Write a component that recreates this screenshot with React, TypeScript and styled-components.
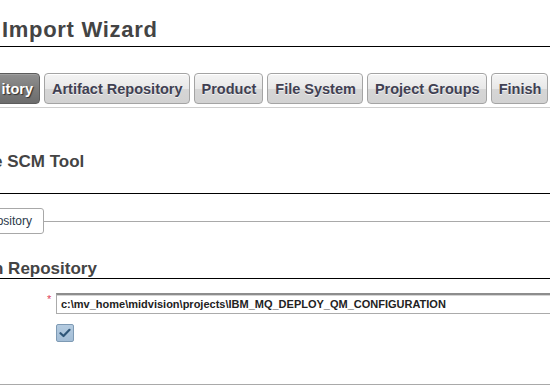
import React from "react";
import styled, { createGlobalStyle } from "styled-components";

const GlobalStyle = createGlobalStyle`
  html, body {
    margin: 0;
    padding: 0;
    background: #ffffff;
    overflow: hidden;
  }
  body {
    font-family: "Liberation Sans", Arial, sans-serif;
  }
`;

const Page = styled.div`
  width: 550px;
  height: 385px;
  overflow: hidden;
  background: #fff;
`;

const Title = styled.h1`
  margin: 0;
  padding: 17px 0 4px 2px;
  font-size: 22px;
  line-height: 25px;
  font-weight: bold;
  letter-spacing: 0.7px;
  color: #444444;
  border-bottom: 1px solid #000;
`;

const TabBar = styled.div`
  display: flex;
  gap: 4px;
  margin-top: 26px;
  padding-bottom: 3px;
  border-bottom: 1px solid #cfcfcf;
`;

const Clip = styled.div<{ $width: number }>`
  width: ${(p) => p.$width}px;
  flex-shrink: 0;
  display: flex;
  justify-content: flex-end;
  overflow: hidden;
`;

const Tab = styled.div<{ $active?: boolean; $lead?: boolean }>`
  flex-shrink: 0;
  box-sizing: border-box;
  height: 31px;
  display: flex;
  align-items: center;
  padding: 0 6px 0 ${(p) => (p.$lead ? 20 : 7)}px;
  border-radius: 4px;
  font-size: 14.5px;
  font-weight: bold;
  white-space: nowrap;
  border: 1px solid ${(p) => (p.$active ? "#5c5c5c" : "#a4a4a4")};
  background: ${(p) =>
    p.$active
      ? "linear-gradient(#909090 0%, #7c7c7c 50%, #6c6c6c 100%)"
      : "linear-gradient(#f4f4f4 0%, #e8e8e8 50%, #d6d6d6 52%, #d2d2d2 100%)"};
  color: ${(p) => (p.$active ? "#ffffff" : "#404052")};
  text-shadow: ${(p) =>
    p.$active ? "1px 1px 1px #2e2e2e" : "0 1px 0 rgba(255,255,255,0.7)"};
  box-shadow: inset 0 1px 0 ${(p) => (p.$active ? "#a0a0a0" : "#ffffff")};
`;

const SectionHeading = styled.h2<{ $gap: number; $pad: number; $lh: number }>`
  margin: ${(p) => p.$gap}px 0 0 0;
  padding: 0 0 ${(p) => p.$pad}px 0;
  text-indent: -7px;
  font-size: 17px;
  line-height: ${(p) => p.$lh}px;
  font-weight: bold;
  color: #444444;
  border-bottom: 1px solid #000;
  white-space: nowrap;
`;

const ButtonRow = styled.div`
  display: flex;
  align-items: center;
  margin-top: 14px;
`;

const OutlineButton = styled.div`
  flex-shrink: 0;
  box-sizing: border-box;
  height: 26px;
  display: flex;
  align-items: center;
  padding: 0 11px 0 20px;
  border: 1px solid #a8a8a8;
  border-radius: 3px;
  background: #ffffff;
  color: #2c3a4a;
  font-size: 12px;
  white-space: nowrap;
`;

const Rule = styled.div`
  flex: 1;
  height: 1px;
  background: #a9a9a9;
`;

const Form = styled.div`
  padding: 14px 0 42px 47px;
  border-bottom: 1px solid #a9a9a9;
`;

const FieldRow = styled.div`
  display: flex;
  align-items: flex-start;
`;

const Required = styled.span`
  width: 9px;
  flex-shrink: 0;
  font-size: 11px;
  line-height: 11px;
  margin-top: 1px;
  color: #e0405a;
`;

const TextInput = styled.div`
  flex-shrink: 0;
  box-sizing: border-box;
  width: 520px;
  height: 21px;
  display: flex;
  align-items: center;
  padding-left: 4px;
  border: 1px solid #ababab;
  border-top: 2px solid #8d8d8d;
  box-shadow: inset 0 1px 0 #d4d4d4;
  background: #fff;
  color: #222222;
  font-size: 11px;
  font-weight: bold;
  white-space: nowrap;
`;

const CheckRow = styled.div`
  display: flex;
  margin-top: 10px;
  padding-left: 9px;
`;

const CheckBox = styled.span`
  box-sizing: border-box;
  width: 18px;
  height: 18px;
  display: flex;
  align-items: center;
  justify-content: center;
  border: 1px solid #7e9ab4;
  border-radius: 2px;
  background: linear-gradient(#b4cbe0, #a3bdd6);
`;

export default function App() {
  return (
    <>
      <GlobalStyle />
      <Page>
        <Title>Import Wizard</Title>
        <TabBar>
          <Clip $width={40}>
            <Tab $active $lead>
              itory
            </Tab>
          </Clip>
          <Tab>Artifact Repository</Tab>
          <Tab>Product</Tab>
          <Tab>File System</Tab>
          <Tab>Project Groups</Tab>
          <Tab>Finish</Tab>
        </TabBar>
        <SectionHeading $gap={44} $pad={21} $lh={20}>
          e SCM Tool
        </SectionHeading>
        <ButtonRow>
          <Clip $width={44}>
            <OutlineButton>ository</OutlineButton>
          </Clip>
          <Rule />
        </ButtonRow>
        <SectionHeading $gap={25} $pad={0} $lh={19}>
          n Repository
        </SectionHeading>
        <Form>
          <FieldRow>
            <Required>*</Required>
            <TextInput>
              c:\mv_home\midvision\projects\IBM_MQ_DEPLOY_QM_CONFIGURATION
            </TextInput>
          </FieldRow>
          <CheckRow>
            <CheckBox>
              <svg width="12" height="10" viewBox="0 0 12 10">
                <path
                  d="M1.5 5.2 L4.5 8 L10.5 1.8"
                  fill="none"
                  stroke="#2f5678"
                  strokeWidth="2.2"
                  strokeLinecap="round"
                  strokeLinejoin="round"
                />
              </svg>
            </CheckBox>
          </CheckRow>
        </Form>
      </Page>
    </>
  );
}
